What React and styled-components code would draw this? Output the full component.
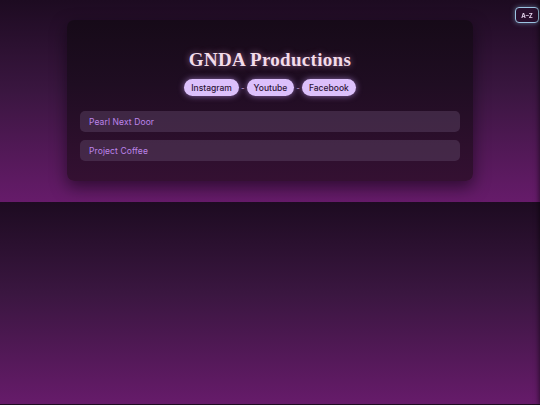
import React from 'react'
import styled, { createGlobalStyle } from 'styled-components'

const GlobalStyle = createGlobalStyle`
  html {
    background: linear-gradient(180deg, #1d0b21 0%, #3a1640 45%, #661b6a 100%);
    background-size: 100% 202px;
    background-repeat: repeat-y;
    min-height: 100%;
  }
  body {
    margin: 0;
    font-family: 'Inter', 'Noto Sans', sans-serif;
    overflow: hidden;
  }
`

const Page = styled.main`
  padding: 20px 0 21px;
  display: flex;
  justify-content: center;
`

const Card = styled.section`
  width: 406px;
  box-sizing: border-box;
  padding: 24px 13px 20px;
  border-radius: 7px;
  background: linear-gradient(180deg, #160a18 0%, #1f0d22 40%, #341032 100%);
  box-shadow: 0 6px 16px rgba(10, 0, 12, 0.55);
  display: flex;
  flex-direction: column;
  align-items: center;
`

const Title = styled.h1`
  margin: 4px 0 7px;
  font-family: 'Liberation Serif', 'DejaVu Serif', serif;
  font-weight: 700;
  font-size: 19px;
  line-height: 24px;
  letter-spacing: 0.3px;
  color: #f3dcea;
  text-shadow: 0 0 6px rgba(240, 170, 220, 0.55);
`

const Socials = styled.nav`
  display: flex;
  align-items: center;
  gap: 1px;
  margin-bottom: 15px;
`

const Pill = styled.a`
  display: inline-flex;
  align-items: center;
  height: 17px;
  padding: 0 7px;
  border-radius: 9px;
  background: #dcc0fb;
  color: #2e1538;
  font-size: 8.5px;
  font-weight: 500;
  text-decoration: none;
  box-shadow: 0 0 6px rgba(205, 160, 255, 0.6);
`

const Sep = styled.span`
  color: #c9a6dc;
  font-size: 8px;
  padding: 0 1px;
`

const List = styled.ul`
  list-style: none;
  margin: 0;
  padding: 0;
  width: 100%;
  display: flex;
  flex-direction: column;
  gap: 8px;
`

const Item = styled.li`
  height: 21px;
  display: flex;
  align-items: center;
  padding: 0 9px;
  border-radius: 5px;
  background: rgba(95, 70, 105, 0.45);
  color: #bd84ea;
  font-size: 8.5px;
  font-weight: 400;
  letter-spacing: 0.1px;
`

const SortButton = styled.button`
  position: fixed;
  top: 7px;
  right: 1px;
  width: 24px;
  height: 16px;
  padding: 0;
  border: 1.5px solid #9cc4e2;
  border-radius: 4px;
  background: #2a0f2e;
  color: #e6d6ee;
  font-family: 'Inter', 'Noto Sans', sans-serif;
  font-size: 6px;
  font-weight: 700;
  box-shadow: 0 0 5px rgba(150, 200, 235, 0.5);
`

const Drawer = styled.aside`
  position: fixed;
  top: 0;
  left: 100%;
  width: 200px;
  height: 100%;
  box-shadow: -1px 0 5px rgba(0, 0, 0, 0.55);
`

const projects = ['Pearl Next Door', 'Project Coffee']
const links = ['Instagram', 'Youtube', 'Facebook']

export default function App() {
  return (
    <>
      <GlobalStyle />
      <Page>
        <Card>
          <Title>GNDA Productions</Title>
          <Socials>
            {links.map((l, i) => (
              <React.Fragment key={l}>
                {i > 0 && <Sep>-</Sep>}
                <Pill href="#">{l}</Pill>
              </React.Fragment>
            ))}
          </Socials>
          <List>
            {projects.map((p) => (
              <Item key={p}>{p}</Item>
            ))}
          </List>
        </Card>
      </Page>
      <SortButton>A–Z</SortButton>
      <Drawer />
    </>
  )
}
